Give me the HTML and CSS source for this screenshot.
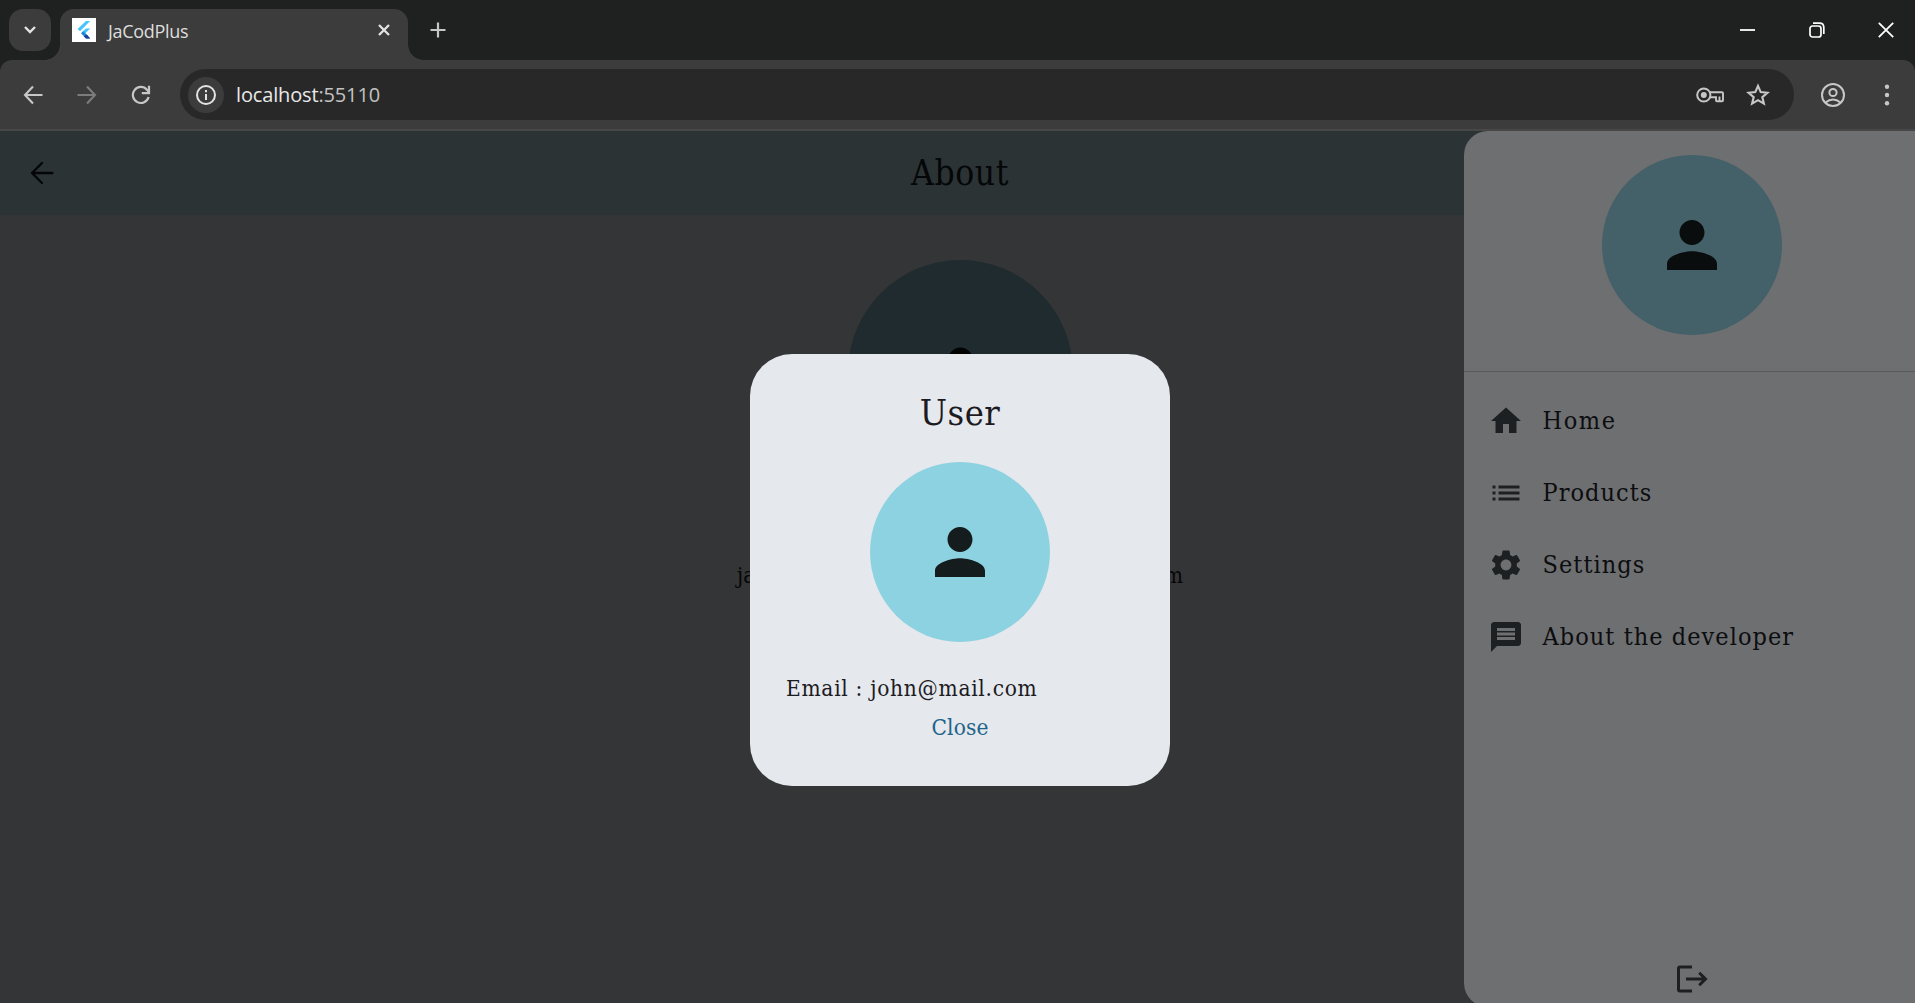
FILE: index.html
```html
<!DOCTYPE html>
<html lang="en">
<head>
<meta charset="utf-8">
<title>JaCodPlus</title>
<link rel="stylesheet" href="styles.css">
</head>
<body>
<div class="browser">
  <div class="chrome">
  <header class="tabstrip">
    <button class="tab-search"><svg width="14" height="10" viewBox="0 0 14 10"><path d="M2 2l5 5 5-5" fill="none" stroke="#e3e3e3" stroke-width="2.4"/></svg></button>
    <div class="tab">
      <span class="favicon"><svg width="24" height="24" viewBox="0 0 24 24"><path d="M14 3h4.200L8 13.300 5.600 11z" fill="#47c5fb"/><path d="M14 10.500h4.200l-5 5-2.500-2.300z" fill="#47c5fb"/><path d="M9 15.300l2.300-2.300 6.900 7.500H14z" fill="#1e88d8"/><path d="M11.800 18.200l3-1.700 3.400 4H14z" fill="#1a3f94"/></svg></span>
      <span class="tab-title">JaCodPlus</span>
      <svg class="tab-close" width="14" height="14" viewBox="0 0 14 14"><path d="M2 2l10 10M12 2L2 12" stroke="#e3e3e3" stroke-width="2.300"/></svg>
    </div>
    <svg class="new-tab" width="16" height="16" viewBox="0 0 16 16"><path d="M8 .5v15M.5 8h15" stroke="#c7c7c7" stroke-width="2.200"/></svg>
    <div class="window-buttons">
      <svg width="16" height="16" viewBox="0 0 16 16"><path d="M0 8h15" stroke="#fff" stroke-width="1.800"/></svg>
      <svg width="16" height="16" viewBox="0 0 16 16"><rect x="1" y="4" width="11" height="11" rx="2.500" fill="none" stroke="#fff" stroke-width="1.700"/><path d="M4 1.200h6.500q4.300 0 4.300 4.300v6.500" fill="none" stroke="#fff" stroke-width="1.700"/></svg>
      <svg width="16" height="16" viewBox="0 0 16 16"><path d="M.8 .8l14.400 14.400M15.200 .8L.8 15.200" stroke="#fff" stroke-width="1.800"/></svg>
    </div>
  </header>
  <nav class="toolbar">
    <svg class="nav-icon" width="20" height="20" viewBox="0 0 20 20"><path d="M10 1.500L2 10l8 8.500M2 10h17.500" fill="none" stroke="#c7c7c7" stroke-width="2.100"/></svg>
    <svg class="nav-icon" width="20" height="20" viewBox="0 0 20 20"><path d="M10 1.500l8 8.500-8 8.500M18 10H.5" fill="none" stroke="#7c7c7c" stroke-width="2.100"/></svg>
    <svg class="nav-icon" width="20" height="20" viewBox="0 0 20 20"><path d="M17.600 12a8 8 0 1 1-1.700-7.300L18 7" fill="none" stroke="#c7c7c7" stroke-width="2.200"/><path d="M18 .8v7.400h-7.200" fill="none" stroke="#c7c7c7" stroke-width="2.200"/></svg>
    <div class="omnibox">
      <span class="site-info"><svg width="20" height="20" viewBox="0 0 20 20"><circle cx="10" cy="10" r="9" fill="none" stroke="#e3e3e3" stroke-width="2"/><path d="M10 9v6M10 5v2.200" stroke="#e3e3e3" stroke-width="2"/></svg></span>
      <span class="url">localhost<span class="port">:55110</span></span>
      <svg class="key" width="28" height="16" viewBox="0 0 28 16"><path d="M14 5.200h12q1 0 1 1v7q0 1-1 1h-5q-1 0-1-1v-3H14M23.500 9.500v4.500" fill="none" stroke="#c7c7c7" stroke-width="1.900"/><circle cx="7.800" cy="8" r="6.600" fill="#282828" stroke="#c7c7c7" stroke-width="2"/><circle cx="7.800" cy="8" r="3" fill="#c7c7c7"/></svg>
      <svg class="star" width="24" height="24" viewBox="0 0 24 24"><path d="M12 2.900l2.700 6.200 6.700.6-5.100 4.400 1.600 6.600-5.900-3.500-5.900 3.500 1.600-6.600-5.100-4.400 6.700-.6z" fill="none" stroke="#c7c7c7" stroke-width="2.100"/></svg>
    </div>
    <svg class="profile" width="24" height="24" viewBox="0 0 24 24"><circle cx="12" cy="12" r="11" fill="none" stroke="#c7c7c7" stroke-width="2"/><circle cx="12" cy="9.500" r="3.600" fill="none" stroke="#c7c7c7" stroke-width="2"/><path d="M4.500 19.500q7.500-6 15 0" fill="none" stroke="#c7c7c7" stroke-width="2"/></svg>
    <svg class="menu-dots" width="6" height="24" viewBox="0 0 6 24"><circle cx="3" cy="3.700" r="2.200" fill="#c7c7c7"/><circle cx="3" cy="12" r="2.200" fill="#c7c7c7"/><circle cx="3" cy="20.300" r="2.200" fill="#c7c7c7"/></svg>
  </nav>
  </div>

  <div class="viewport">
    <main class="page">
      <div class="appbar">
        <svg class="back" width="24" height="24" viewBox="0 0 24 24"><path d="M12 2L2 12l10 10M2 12h20.500" fill="none" stroke="#040506" stroke-width="2.300" stroke-linecap="round" stroke-linejoin="round"/></svg>
        <h1 class="appbar-title">About</h1>
      </div>
      <div class="page-avatar"><svg width="75" height="75" viewBox="0 0 24 24"><path fill="#020303" d="M12 12c2.210 0 4-1.790 4-4s-1.790-4-4-4-4 1.790-4 4 1.790 4 4 4zm0 2c-2.670 0-8 1.340-8 4v2h16v-2c0-2.660-5.330-4-8-4z"/></svg></div>
      <div class="contact"><span>ja</span><span>m</span></div>
    </main>

    <aside class="drawer">
      <div class="drawer-head"><div class="avatar"><svg width="76" height="76" viewBox="-.16 -.16 24.32 24.32"><path fill="#090d0e" d="M12 12c2.210 0 4-1.790 4-4s-1.790-4-4-4-4 1.790-4 4 1.790 4 4 4zm0 2c-2.670 0-8 1.340-8 4v2h16v-2c0-2.660-5.330-4-8-4z"/></svg></div></div>
      <ul class="drawer-list">
        <li class="drawer-item"><svg class="icon" viewBox="0 0 24 24"><path d="M10 20v-6h4v6h5v-8h3L12 3 2 12h3v8z"/></svg><span class="label-home">Home</span></li>
        <li class="drawer-item"><svg class="icon" viewBox="0 0 24 24"><path d="M3 13h2v-2H3v2zm0 4h2v-2H3v2zm0-8h2V7H3v2zm4 4h14v-2H7v2zm0 4h14v-2H7v2zM7 7v2h14V7H7z"/></svg><span>Products</span></li>
        <li class="drawer-item"><svg class="icon" viewBox="0 0 24 24"><path d="M19.140 12.940c.04-.3.060-.61.060-.94 0-.32-.02-.64-.07-.94l2.030-1.580c.18-.14.23-.41.12-.61l-1.920-3.320c-.12-.22-.37-.29-.59-.22l-2.390.96c-.5-.38-1.030-.7-1.620-.94l-.36-2.540c-.04-.24-.24-.41-.48-.41h-3.840c-.24 0-.43.17-.47.41l-.36 2.540c-.59.24-1.130.57-1.620.94l-2.390-.96c-.22-.08-.47 0-.59.22L2.740 8.870c-.12.21-.08.47.12.61l2.030 1.580c-.05.3-.09.63-.09.94s.02.64.07.94l-2.030 1.580c-.18.14-.23.41-.12.61l1.920 3.320c.12.22.37.29.59.22l2.390-.96c.5.38 1.030.7 1.620.94l.36 2.540c.05.24.24.41.48.41h3.840c.24 0 .44-.17.47-.41l.36-2.540c.59-.24 1.130-.56 1.620-.94l2.390.96c.22.08.47 0 .59-.22l1.920-3.320c.12-.22.070-.47-.12-.61l-2.010-1.580zM12 15.600c-1.980 0-3.600-1.620-3.600-3.600s1.620-3.600 3.600-3.600 3.600 1.620 3.600 3.600-1.620 3.600-3.600 3.600z"/></svg><span>Settings</span></li>
        <li class="drawer-item"><svg class="icon" viewBox="0 0 24 24"><path d="M20 2H4c-1.100 0-1.990.9-1.990 2L2 22l4-4h14c1.100 0 2-.9 2-2V4c0-1.100-.9-2-2-2zm-2 12H6v-2h12v2zm0-3H6V9h12v2zm0-3H6V6h12v2z"/></svg><span>About the developer</span></li>
      </ul>
      <svg class="logout" width="36" height="36" viewBox="0 0 24 24"><path d="M12 4H4q-1 0-1 1v14q0 1 1 1h8M8 12h12M16.800 7.800L21 12l-4.200 4.200" fill="none" stroke="#1c2022" stroke-width="2"/></svg>
    </aside>

    <section class="dialog">
      <h2 class="dialog-title">User</h2>
      <div class="avatar avatar-bright"><svg width="76" height="76" viewBox="-.16 -.16 24.32 24.32"><path fill="#141c1e" d="M12 12c2.210 0 4-1.790 4-4s-1.790-4-4-4-4 1.790-4 4 1.790 4 4 4zm0 2c-2.670 0-8 1.340-8 4v2h16v-2c0-2.660-5.330-4-8-4z"/></svg></div>
      <p class="email">Email : john@mail.com</p>
      <button class="close">Close</button>
    </section>
  </div>
</div>
</body>
</html>
```
FILE: styles.css
```css
* { box-sizing: border-box; }
body { margin: 0; font-family: "DejaVu Serif Condensed", "DejaVu Serif", serif; font-stretch: condensed; background: #343536; }
h1, h2, p, ul { margin: 0; padding: 0; font-weight: 400; }
button { border: 0; padding: 0; background: none; font: inherit; }
svg { display: block; flex: none; }
.browser { display: flex; flex-direction: column; width: 1915px; height: 1003px; overflow: hidden; }

.chrome { flex: none; background: #1f2120; }
.tabstrip { display: flex; height: 60px; padding: 9px 7px 0 9px; }
.tab-search { display: grid; place-items: center; width: 42px; height: 42px; border-radius: 14px; background: #3c3c3c; }
.tab { position: relative; display: flex; align-items: center; width: 348px; height: 51px; margin-left: 9px; padding: 0 17px 9px 12px; border-radius: 14px 14px 0 0; background: #3c3c3c; }
.tab::before, .tab::after { content: ""; position: absolute; bottom: 0; width: 15px; height: 15px; }
.tab::before { left: -15px; background: radial-gradient(circle at 0 0, transparent 14.500px, #3c3c3c 15px); }
.tab::after { right: -15px; background: radial-gradient(circle at 100% 0, transparent 14.500px, #3c3c3c 15px); }
.favicon { width: 24px; height: 24px; background: #fff; }
.tab-title { margin: 2px 0 0 12px; flex: 1; font: 18px/24px "Open Sans", sans-serif; color: #dedede; letter-spacing: -.3px; }
.new-tab { margin: 13px 0 0 22px; }
.window-buttons { display: flex; gap: 53px; margin: 13px 14px 0 auto; }

.toolbar { display: flex; align-items: center; height: 71px; padding: 0 25px 0 23px; background: #3c3c3c; border-bottom: 2px solid #474747; border-radius: 12px 12px 0 0; }
.nav-icon { margin-right: 34px; }
.omnibox { display: flex; align-items: center; width: 1614px; height: 51px; margin-left: -5px; padding: 0 24px 0 8px; border-radius: 26px; background: #282828; }
.site-info { display: grid; place-items: center; width: 36px; height: 36px; border-radius: 50%; background: #3c3c3c; }
.url { flex: 1; margin-left: 12px; font: 20px/28px "Open Sans", sans-serif; letter-spacing: -.15px; color: #e8e8e8; }
.port { color: #c2c2c2; }
.star { margin-left: 22px; }
.profile { margin-left: 27px; }
.menu-dots { margin-left: auto; }

.viewport { position: relative; flex: 1; background: #343536; overflow: hidden; }
.page { display: flex; flex-direction: column; align-items: center; width: 1920px; }
.appbar { display: flex; align-items: center; width: 100%; height: 84px; padding-left: 30px; background: #2b3335; }
.appbar-title { flex: 1; margin-right: 54px; text-align: center; font-size: 35px; line-height: 40px; letter-spacing: .6px; color: #050607; }
.page-avatar { display: grid; place-items: center; width: 225px; height: 225px; margin-top: 45px; border-radius: 50%; background: #1f2b2e; }
.contact { display: flex; justify-content: space-between; width: 446px; margin-top: 75px; font-size: 22px; line-height: 32px; color: #060606; }

.drawer { position: absolute; top: 0; right: 0; display: flex; flex-direction: column; align-items: center; width: 451px; height: 876px; border-radius: 24px 0 0 24px; background: #6e6f71; }
.drawer-head { display: flex; justify-content: center; width: 100%; height: 241px; padding: 24px 0 0 5px; border-bottom: 1px solid #58595a; flex: none; }
.avatar { display: grid; place-items: center; width: 180px; height: 180px; border-radius: 50%; background: #446068; }
.drawer-list { list-style: none; width: 100%; padding: 13px 0 0 24px; }
.drawer-item { display: flex; align-items: center; gap: 18.500px; height: 72px; font-size: 25px; line-height: 32px; letter-spacing: 1.050px; color: #0c0d0f; }
.label-home { letter-spacing: 1.600px; }
.icon { width: 36px; height: 36px; fill: #1c2022; }
.logout { margin: auto 0 10px 5px; }

.dialog { position: absolute; left: 750px; top: 223px; display: flex; flex-direction: column; align-items: center; width: 420px; height: 432px; padding-top: 36px; border-radius: 42px; background: #e5e8ed; color: #1c1b1f; }
.dialog-title { font-size: 36px; line-height: 46px; margin-bottom: 26px; letter-spacing: .5px; }
.avatar-bright { background: #8dd2e1; }
.email { align-self: stretch; margin-top: 30px; padding-left: 36px; font-size: 22.500px; line-height: 32px; letter-spacing: .7px; }
.close { margin-top: 7px; font-size: 22.500px; line-height: 32px; letter-spacing: .1px; color: #21648a; }
```
